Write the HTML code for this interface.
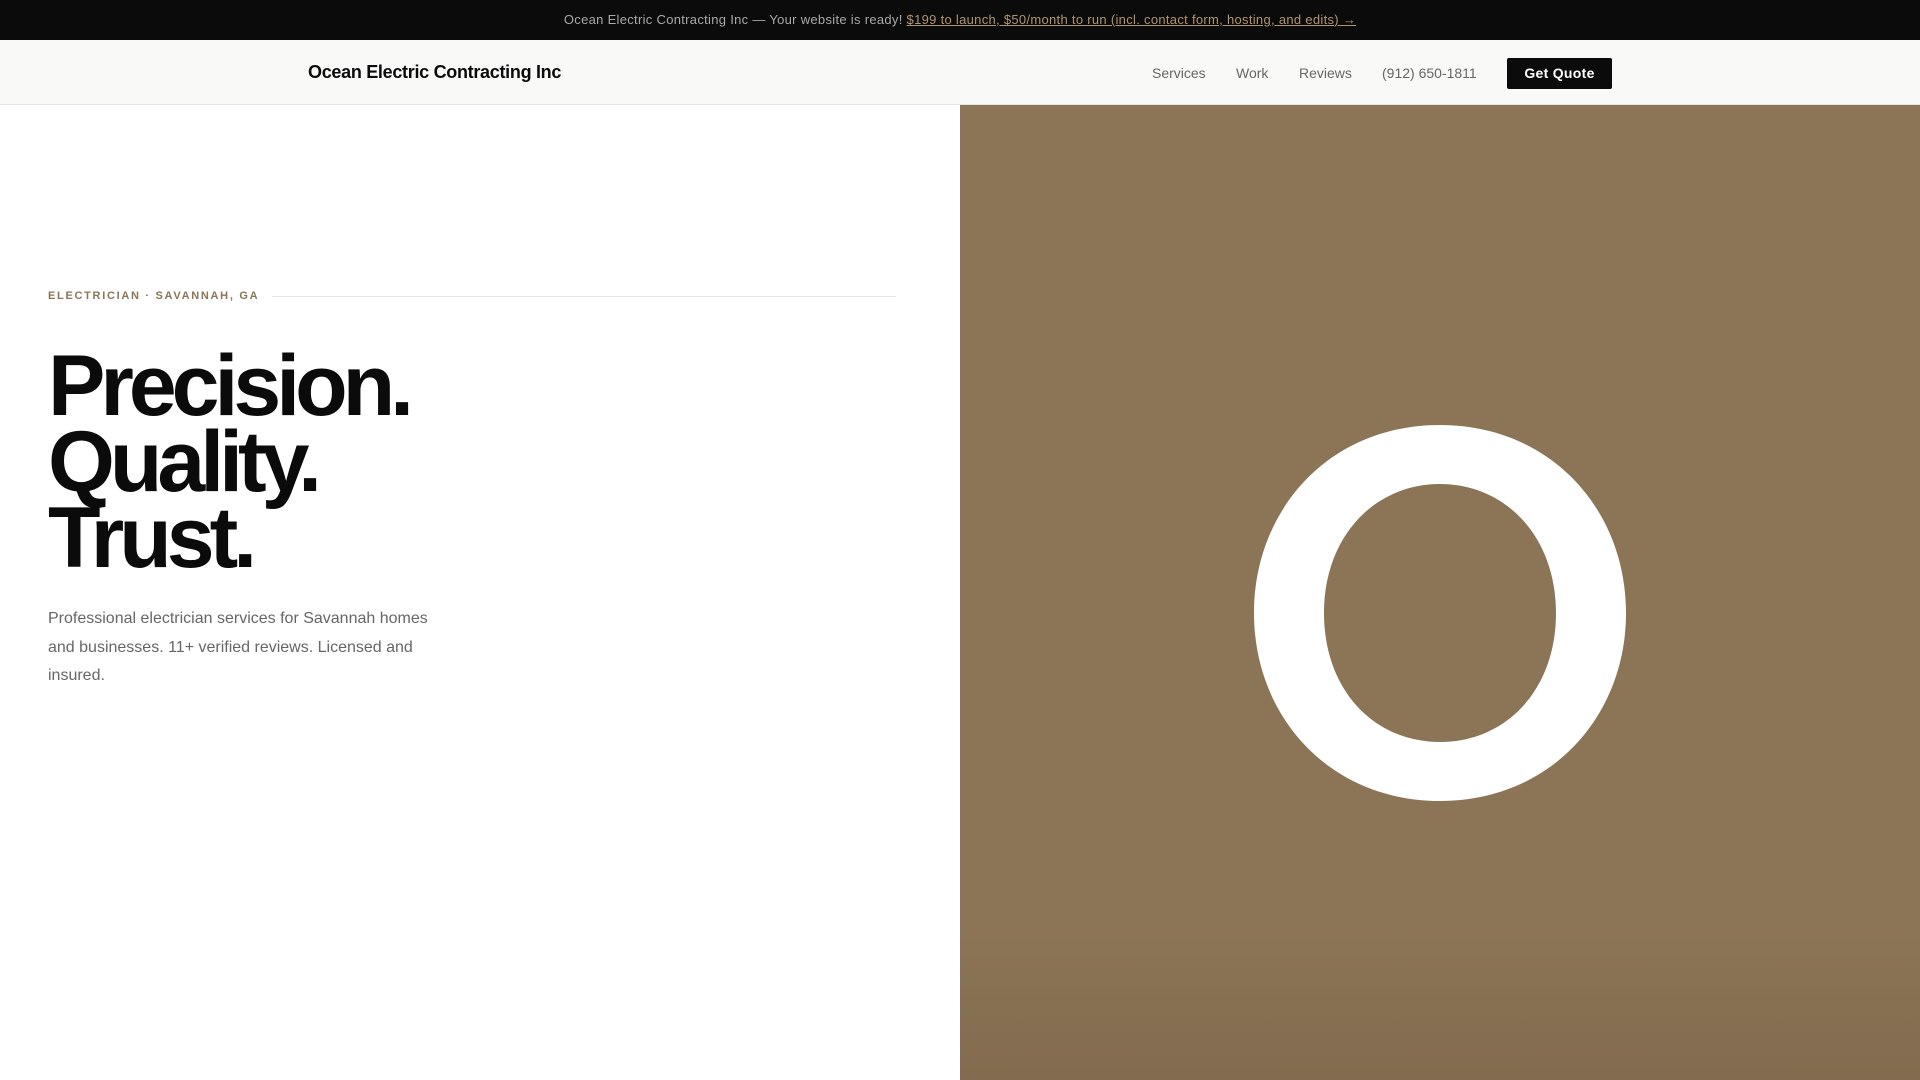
<!DOCTYPE html>
<html><head><meta charset="utf-8"><style>
*{margin:0;padding:0;box-sizing:border-box}
body{width:1920px;height:1080px;overflow:hidden;font-family:"Liberation Sans",Arial,sans-serif;background:#fff;position:relative}
.top{position:absolute;left:0;top:0;width:1920px;height:40px;background:#0b0b0b;color:#a8a8a8;font-size:13px;letter-spacing:0.3px;text-align:center;line-height:40px}
.top a{color:#b09470;text-decoration:underline}
.nav{position:absolute;left:0;top:40px;width:1920px;height:65px;background:#f9f9f7;border-bottom:1px solid #e4e4e2}
.logo{position:absolute;left:308px;top:22px;font-size:18px;font-weight:bold;color:#0b0b0b;letter-spacing:-0.3px}
.links{position:absolute;top:25px;font-size:14px;color:#666;letter-spacing:0}
.btn{position:absolute;left:1507px;top:18px;width:105px;height:31px;background:#0b0b0b;color:#fff;font-size:14px;font-weight:bold;text-align:center;line-height:31px;border-radius:2px;letter-spacing:0.3px}
.right{position:absolute;left:960px;top:105px;width:960px;height:975px;background:linear-gradient(#8b7556 0%,#8b7556 85%,#826b4e 100%)}
.right svg{position:absolute;left:0;top:0}
.eye{position:absolute;left:48px;top:290px;font-size:11px;font-weight:bold;color:#8b7556;letter-spacing:1.7px}
.line{position:absolute;left:272px;top:296px;width:624px;height:1px;background:#e6e6e6}
h1{position:absolute;left:48px;top:348px;font-size:86px;line-height:76px;font-weight:bold;color:#0b0b0b;letter-spacing:-5px}
p{position:absolute;left:48px;top:605px;width:395px;font-size:16px;line-height:28.5px;color:#666}
</style></head><body>
<div class="top">Ocean Electric Contracting Inc — Your website is ready! <a>$199 to launch, $50/month to run (incl. contact form, hosting, and edits) →</a></div>
<div class="nav">
<div class="logo">Ocean Electric Contracting Inc</div>
<div class="links" style="left:1152px">Services</div>
<div class="links" style="left:1236px">Work</div>
<div class="links" style="left:1299px">Reviews</div>
<div class="links" style="left:1382px">(912) 650-1811</div>
<div class="btn">Get Quote</div>
</div>
<div class="right"><svg width="960" height="975"><path fill="#fff" fill-rule="evenodd" d="M480 320 C590 320 666 404 666 508 C666 612 590 696 480 696 C370 696 294 612 294 508 C294 404 370 320 480 320 Z M480 379 C414 379 364 432 364 508 C364 585 414 637 480 637 C546 637 596 585 596 508 C596 432 546 379 480 379 Z"/></svg></div>
<div class="eye">ELECTRICIAN · SAVANNAH, GA</div>
<div class="line"></div>
<h1>Precision.<br>Quality.<br>Trust.</h1>
<p>Professional electrician services for Savannah homes and businesses. 11+ verified reviews. Licensed and insured.</p>
</body></html>
